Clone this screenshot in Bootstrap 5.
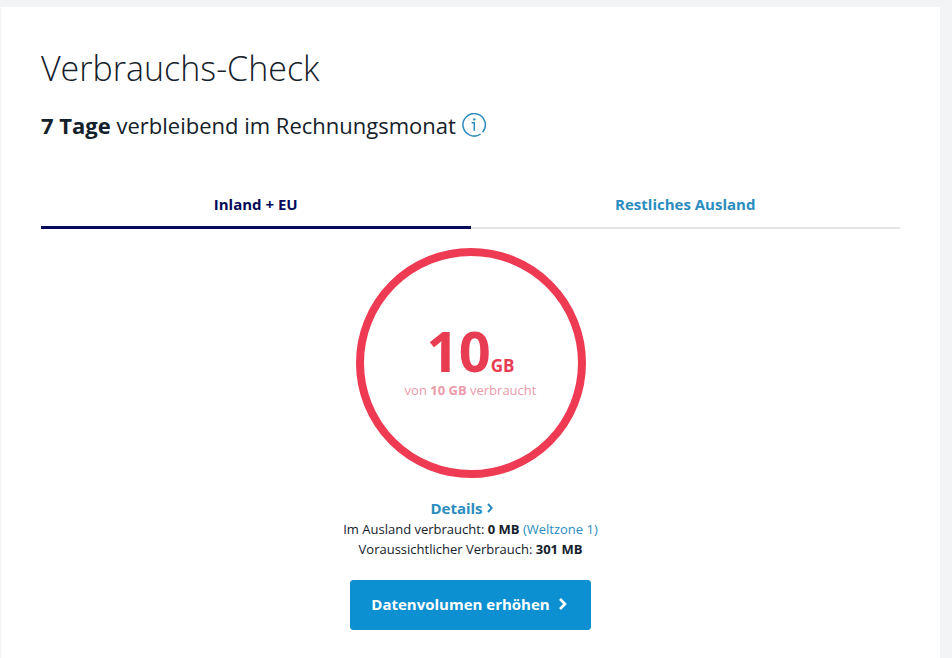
<!DOCTYPE html>
<html lang="de">
<head>
<meta charset="utf-8">
<meta name="viewport" content="width=device-width, initial-scale=1">
<title>Verbrauchs-Check</title>
<link href="https://cdn.jsdelivr.net/npm/bootstrap@5.3.0/dist/css/bootstrap.min.css" rel="stylesheet">
<style>
  body { background: #f3f4f6; color: #14202a; font-family: "Open Sans", "Noto Sans", sans-serif; font-weight: 400; padding: 7px 12px 0 1px; }
  .usage-panel { padding: 39px 40px 28px; }
  strong { font-weight: 700; }
  a { color: #2a8cc0; text-decoration: none; }
  a:hover { text-decoration: underline; }
  .panel-title { font-size: 34px; line-height: 44px; font-weight: 300; margin-bottom: 21px; }
  .period { font-size: 22px; line-height: 28px; margin-bottom: 53px; gap: 6px; }
  .info-btn { color: #2a8cc0; line-height: 0; }
  .usage-tabs { box-shadow: inset 0 -2px #e3e4e6; }
  .usage-tabs .nav-link { color: #2a8cc0; font-size: 15px; line-height: 24px; font-weight: 700; padding: 0 0 10px; border-radius: 0; border-bottom: 3px solid transparent; }
  .usage-tabs .nav-link.active { background: none; color: #050a5a; border-color: #050a5a; }
  .usage-ring { width: 230px; height: 230px; border: 8px solid #ee3a52; border-radius: 50%; margin: 19px auto; padding-bottom: 4px; color: #e83c52; }
  .amount { font-size: 56px; line-height: 56px; font-weight: 700; }
  .unit { font-size: 17px; line-height: 20px; font-weight: 700; }
  .amount-note { font-size: 13px; line-height: 20px; margin-top: 2px; color: #eb9aa9; }
  .details-link { font-size: 15px; line-height: 22px; font-weight: 700; margin-right: 18px; }
  .facts { font-size: 13px; line-height: 20px; }
  .cta { --bs-btn-bg: #0d90d2; --bs-btn-border-color: #0d90d2; --bs-btn-hover-bg: #0b80bb; --bs-btn-color: #fff; --bs-btn-hover-color: #fff; font-size: 15px; line-height: 24px; font-weight: 700; padding: 11px 20px 13px; border-radius: 3px; margin-top: 21px; }
</style>
</head>
<body>
<main class="usage-panel bg-white">
  <h1 class="panel-title">Verbrauchs-Check</h1>
  <div class="period d-flex align-items-center">
    <span><strong>7 Tage</strong> verbleibend im Rechnungsmonat</span>
    <button type="button" class="info-btn btn border-0 p-0" aria-label="Information">
      <svg width="24" height="24" viewBox="0 0 24 24" fill="none" stroke="currentColor" stroke-width="1.5" aria-hidden="true">
        <path d="M18.6 21A11.2 11.2 0 1 1 20.6 19.2"/>
        <path d="M9.6 9.7h2.7v8.1"/>
        <circle cx="12.3" cy="6.4" r="1.2" fill="currentColor" stroke="none"/>
      </svg>
    </button>
  </div>
  <ul class="usage-tabs nav nav-pills nav-justified" role="tablist">
    <li class="nav-item" role="presentation"><button class="nav-link active" type="button" role="tab" aria-selected="true" data-bs-toggle="tab">Inland + EU</button></li>
    <li class="nav-item" role="presentation"><button class="nav-link" type="button" role="tab" aria-selected="false" data-bs-toggle="tab">Restliches Ausland</button></li>
  </ul>
  <section class="text-center">
    <div class="usage-ring d-flex flex-column align-items-center justify-content-center">
      <div class="d-flex align-items-baseline"><span class="amount">10</span><span class="unit">GB</span></div>
      <div class="amount-note">von <strong>10 GB</strong> verbraucht</div>
    </div>
    <div class="d-flex justify-content-center">
      <a href="#" class="details-link d-flex align-items-center gap-1">Details
        <svg width="6" height="10" viewBox="0 0 6 10" fill="none" stroke="currentColor" stroke-width="2" aria-hidden="true"><path d="M1 1l3.7 4L1 9"/></svg>
      </a>
    </div>
    <div class="facts">Im Ausland verbraucht: <strong>0 MB</strong> <a href="#">(Weltzone 1)</a></div>
    <div class="facts">Voraussichtlicher Verbrauch: <strong>301 MB</strong></div>
    <button type="button" class="cta btn d-inline-flex align-items-center gap-2">Datenvolumen erhöhen
      <svg width="12" height="12" viewBox="0 0 12 12" fill="none" stroke="currentColor" stroke-width="2.6" aria-hidden="true"><path d="M2 1l5 5-5 5"/></svg>
    </button>
  </section>
</main>
<script src="https://cdn.jsdelivr.net/npm/bootstrap@5.3.0/dist/js/bootstrap.bundle.min.js"></script>
</body>
</html>
